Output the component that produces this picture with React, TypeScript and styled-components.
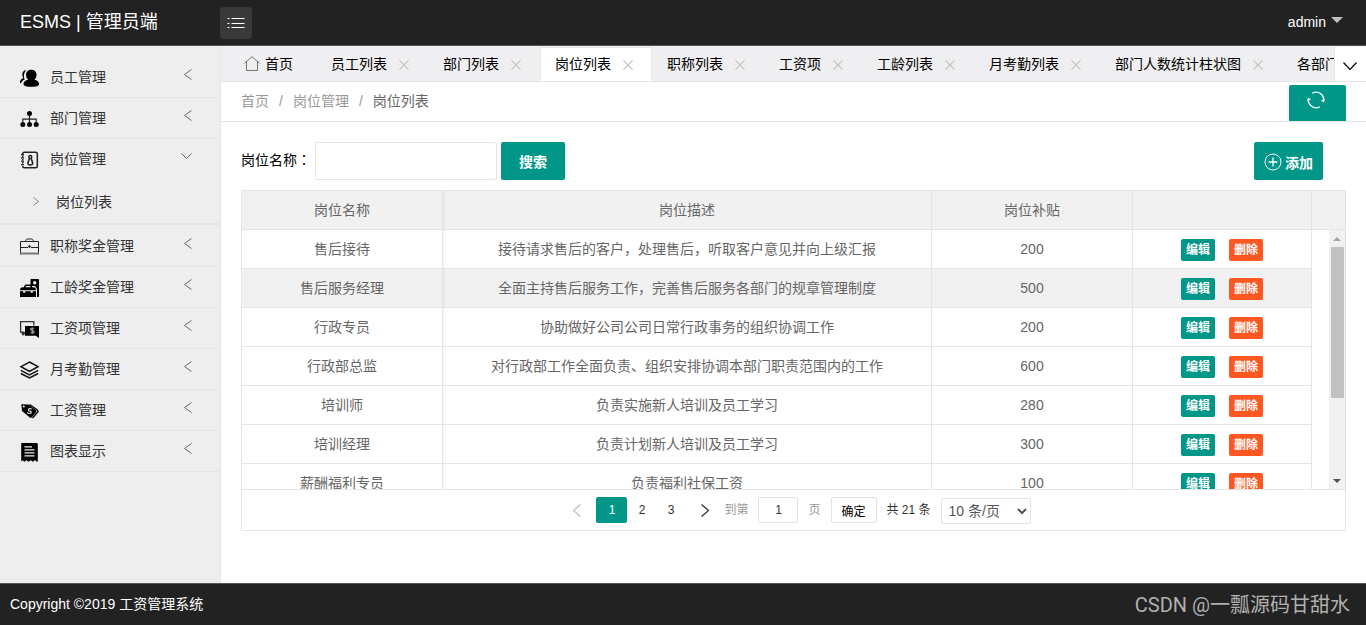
import React from "react";
import styled, { createGlobalStyle, css } from "styled-components";

const GlobalStyle = createGlobalStyle`
  *, *::before, *::after { box-sizing: border-box; }
  html, body { margin: 0; padding: 0; }
  body, button, input, select {
    font-family: "Liberation Sans", "Noto Sans CJK SC", sans-serif;
    font-size: 14px;
  }
  body { background: #fff; color: #000; line-height: 20px; }
  ul, ol { list-style: none; margin: 0; padding: 0; }
  a { color: inherit; text-decoration: none; }
  button { cursor: pointer; border: 0; padding: 0; margin: 0; background: none; color: inherit; }
  svg { display: block; flex: none; }
`;

const Page = styled.div`
  display: flex;
  flex-direction: column;
  min-height: 100vh;
`;

const TopBar = styled.header`
  display: flex;
  align-items: center;
  height: 46px;
  background: #222;
  border-bottom: 1px solid #555;
  color: #fff;
`;

const Brand = styled.a`
  width: 220px;
  padding-left: 20px;
  padding-bottom: 2px;
  font-size: 18px;
  line-height: 24px;
`;

const MenuToggle = styled.button`
  display: flex;
  align-items: center;
  justify-content: center;
  width: 32px;
  height: 32px;
  border-radius: 3px;
  background: #393939;
`;

const UserMenu = styled.button`
  display: flex;
  align-items: center;
  gap: 5px;
  margin-left: auto;
  margin-right: 23px;
  padding-bottom: 2px;
  line-height: 20px;
`;

const Caret = styled.span`
  border: 6px solid transparent;
  border-top-color: #c0c0c0;
  border-bottom: 0;
  margin-bottom: 3px;
`;

const Middle = styled.div`
  display: flex;
  flex: 1;
`;

const Sidebar = styled.nav`
  flex: none;
  width: 221px;
  padding-top: 11px;
  background: #eee;
  border-right: 1px solid #e5e5e5;
  color: #333;
`;

const MenuGroup = styled.li<{ $open?: boolean }>`
  border-bottom: ${(p) => (p.$open ? 2 : 1)}px solid #e5e5e5;
  margin-bottom: ${(p) => (p.$open ? 1 : 0)}px;
`;

const MenuLink = styled.a`
  display: flex;
  align-items: center;
  height: 40px;
  padding: 1px 28px 0 19px;
  gap: 10px;
`;

const MenuText = styled.span`
  flex: 1;
  line-height: 20px;
  padding-bottom: 2px;
`;

const MenuArrow = styled.span`
  margin-bottom: 7px;
`;

const SubLink = styled.a`
  display: flex;
  align-items: center;
  gap: 17px;
  height: 44px;
  padding: 1px 0 0 33px;
`;

const Main = styled.main`
  flex: 1;
  min-width: 0;
`;

const TabBar = styled.div`
  display: flex;
  height: 36px;
  background: #efeef0;
  border-bottom: 1px solid #e5e5e5;
`;

const TabList = styled.ul`
  display: flex;
  flex: 1;
  min-width: 0;
  overflow: hidden;
  padding-left: 8px;
`;

const Tab = styled.li<{ $active?: boolean }>`
  display: flex;
  flex: none;
  align-items: center;
  gap: 12px;
  height: 34px;
  margin-top: 1px;
  padding: 0 18px 2px 14px;
  border: 1px solid ${(p) => (p.$active ? "#e5e5e5" : "transparent")};
  border-bottom: 0;
  background: ${(p) => (p.$active ? "#fff" : "transparent")};
  white-space: nowrap;
  button {
    padding-top: 2px;
  }
`;

const HomeTab = styled(Tab)`
  gap: 5px;
  padding: 0 22px 2px 14px;
`;

const TabDrop = styled.button`
  display: flex;
  flex: none;
  align-items: center;
  justify-content: center;
  width: 32px;
  height: 34px;
  margin-top: 1px;
  padding: 4px 2px 0 0;
  background: #fff;
  border-left: 1px solid #e5e5e5;
`;

const CrumbBar = styled.div`
  display: flex;
  align-items: flex-end;
  justify-content: space-between;
  height: 40px;
  padding: 0 20px;
  border-bottom: 1px solid #e5e5e5;
`;

const Crumbs = styled.ol`
  display: flex;
  gap: 10px;
  padding-bottom: 10px;
  color: #999;
  li + li::before {
    content: "/";
    margin-right: 10px;
  }
  li:last-child a {
    color: #666;
  }
`;

const RefreshButton = styled.button`
  display: flex;
  justify-content: center;
  width: 57px;
  height: 36px;
  padding: 6px 3px 0 0;
  background: #009688;
  border-radius: 2px 2px 0 0;
`;

const Content = styled.div`
  padding: 20px;
`;

const Toolbar = styled.form`
  display: flex;
  align-items: center;
  gap: 4px;
  padding-right: 23px;
  margin-bottom: 10px;
`;

const FieldLabel = styled.label`
  padding-bottom: 2px;
`;

const Colon = styled.span`
  font-family: "Noto Sans CJK TC", sans-serif;
  line-height: 1;
`;

const TextBox = styled.input`
  width: 182px;
  height: 38px;
  padding: 0 10px;
  border: 1px solid #e6e6e6;
  border-radius: 2px;
`;

const SolidButton = styled.button`
  display: flex;
  align-items: center;
  justify-content: center;
  gap: 3px;
  height: 38px;
  padding: 0 18px;
  border-radius: 2px;
  background: #009688;
  color: #fff;
  font-weight: 700;
`;

const AddButton = styled(SolidButton)`
  margin-left: auto;
  padding: 2px 10px 0;
`;

const Panel = styled.section`
  border: 1px solid #e5e5e5;
  color: #666;
`;

const Grid = styled.table`
  width: 100%;
  table-layout: fixed;
  border-collapse: separate;
  border-spacing: 0;
  th, td {
    height: 39px;
    padding: 0;
    text-align: center;
    font-weight: 400;
    border-right: 1px solid #e5e5e5;
    border-bottom: 1px solid #e5e5e5;
    white-space: nowrap;
    overflow: hidden;
  }
  th:nth-child(2), td:nth-child(2) {
    box-shadow: inset 3px 0 3px -2px rgba(0, 0, 0, 0.06);
  }
`;

const HeadGrid = styled(Grid)`
  background: #f1f1f1;
  th:last-child { border-right: 0; }
`;

const BodyRow = styled.tr<{ $hover?: boolean }>`
  background: ${(p) => (p.$hover ? "#f1f1f1" : "#fff")};
`;

const Body = styled.div`
  display: flex;
  height: 260px;
  overflow: hidden;
  border-bottom: 1px solid #e5e5e5;
`;

const Rows = styled.div`
  flex: 1;
  min-width: 0;
  margin-right: 17px;
`;

const ScrollTrack = styled.div`
  display: flex;
  flex-direction: column;
  align-items: center;
  width: 16px;
  background: #f1f1f1;
`;

const ScrollThumb = styled.div`
  width: 13px;
  height: 151px;
  background: #c1c1c1;
`;

const ScrollArrow = styled.span<{ $down?: boolean }>`
  width: 8px;
  border: 4px solid transparent;
  ${(p) =>
    p.$down
      ? css`
          border-top-color: #505050;
          border-bottom: 0;
          margin: auto 0 6px;
        `
      : css`
          border-bottom-color: #a3a3a3;
          border-top: 0;
          margin: 7px 0 6px;
        `}
`;

const Actions = styled.div`
  display: flex;
  justify-content: center;
  gap: 14px;
  padding-top: 2px;
`;

const SmallButton = styled.button<{ $danger?: boolean }>`
  width: 34px;
  height: 22px;
  line-height: 22px;
  border-radius: 2px;
  background: ${(p) => (p.$danger ? "#ff5722" : "#009688")};
  color: #fff;
  font-size: 12px;
  font-weight: 700;
`;

const Pager = styled.div`
  display: flex;
  align-items: center;
  justify-content: center;
  height: 40px;
  padding-left: 1px;
  font-size: 12px;
  color: #333;
  gap: 10px;
`;

const PageButtons = styled.div`
  display: flex;
  align-items: center;
  margin-right: -10px;
`;

const PageButton = styled.button<{ $active?: boolean }>`
  display: flex;
  align-items: center;
  justify-content: center;
  width: ${(p) => (p.$active ? 31 : 29)}px;
  height: 26px;
  border-radius: 2px;
  font-size: 12px;
  color: ${(p) => (p.$active ? "#fff" : "#333")};
  background: ${(p) => (p.$active ? "#009688" : "transparent")};
`;

const ArrowButton = styled(PageButton)`
  width: 39px;
`;

const JumpLabel = styled.label`
  display: flex;
  align-items: center;
  gap: 10px;
  color: #999;
`;

const PageInput = styled.input`
  width: 40px;
  height: 26px;
  padding: 0;
  border: 1px solid #e2e2e2;
  border-radius: 2px;
  text-align: center;
  font-size: 12px;
  color: #333;
`;

const ConfirmButton = styled.button`
  width: 46px;
  height: 26px;
  border: 1px solid #e2e2e2;
  border-radius: 2px;
  font-size: 12px;
  color: #000;
`;

const SizeSelect = styled.select`
  width: 90px;
  height: 26px;
  margin-top: 2px;
  padding: 0 3px;
  border: 1px solid #e2e2e2;
  border-radius: 2px;
  background: #fff;
  color: #555;
`;

const Footer = styled.footer`
  display: flex;
  align-items: center;
  justify-content: space-between;
  height: 42px;
  padding: 0 16px 0 10px;
  background: #222;
  border-top: 1px solid #555;
  color: #fff;
`;

const Copyright = styled.span`
  padding-bottom: 2px;
`;

const Credit = styled.span`
  font-family: Roboto, "Noto Sans CJK SC", sans-serif;
  font-size: 20px;
  line-height: 24px;
  color: #b0b0b0;
`;

type ChevronProps = {
  dir: "left" | "right" | "down";
  w: number;
  h: number;
  color?: string;
  stroke?: number;
};

const Chevron = ({ dir, w, h, color = "#666", stroke = 1 }: ChevronProps) => {
  const pts =
    dir === "left"
      ? `${w - 0.5},0.5 0.5,${h / 2} ${w - 0.5},${h - 0.5}`
      : dir === "right"
      ? `0.5,0.5 ${w - 0.5},${h / 2} 0.5,${h - 0.5}`
      : `0.5,0.5 ${w / 2},${h - 0.5} ${w - 0.5},0.5`;
  return (
    <svg width={w} height={h} viewBox={`0 0 ${w} ${h}`} fill="none" stroke={color} strokeWidth={stroke} aria-hidden="true">
      <polyline points={pts} />
    </svg>
  );
};

const CloseIcon = () => (
  <svg width="10" height="10" viewBox="0 0 10 10" fill="none" stroke="#c2c2c2" strokeWidth="1.2" aria-hidden="true">
    <path d="M0.4 0.4 9.600 9.600M9.600 0.4 0.4 9.600" />
  </svg>
);

const MenuIcon = ({ children }: { children: React.ReactNode }) => (
  <svg width="21" height="20" viewBox="0 0 21 20" fill="#000" aria-hidden="true">
    {children}
  </svg>
);

const icons: Record<string, React.ReactNode> = {
  staff: (
    <>
      <path d="M12.300 1.800c3.300 0 5.200 2.100 5.200 5 0 2.200-.8 3.900-2.100 5 2.800.6 4.700 2 4.700 4.100 0 1.900-3.200 2.900-7.800 2.900s-7.800-1-7.800-2.900c0-2.100 1.900-3.500 4.700-4.100-1.300-1.100-2.100-2.800-2.100-5 0-2.900 1.900-5 5.200-5z" />
      <path d="M7.200 2.200C4.700 2.300 3.300 4 3.300 6.500c0 1.500.4 2.700 1.100 3.600C2.300 11.100.9 12.500.9 14.300c0 .6.4 1 1.100 1.300.3-2 1.500-3.300 3.600-4.200-1.300-3.100-.8-6.600 1.600-9.200z" />
    </>
  ),
  tree: (
    <>
      <circle cx="10.500" cy="4.500" r="2.500" />
      <circle cx="3.800" cy="15.400" r="2.500" />
      <circle cx="10.500" cy="15.400" r="2.500" />
      <circle cx="17.200" cy="15.400" r="2.500" />
      <path d="M3.800 14V10.200H17.200V14M10.500 6V14" fill="none" stroke="#222" strokeWidth="1.200" />
    </>
  ),
  book: (
    <>
      <path d="M3.700 4V3.700c0-.9.600-1.500 1.500-1.500h11.600c.9 0 1.500.6 1.500 1.500v12.600c0 .9-.6 1.500-1.500 1.500H5.200c-.9 0-1.500-.6-1.500-1.500V16M3.700 5.500v1.500M3.700 8.700v1.500M3.700 11.900v1.500" fill="none" stroke="#222" strokeWidth="1.500" />
      <path d="M2 4.700h3M2 7.900h3M2 11.100h3M2 14.700h3" stroke="#222" strokeWidth="1.300" />
      <circle cx="11.300" cy="7" r="1.500" fill="none" stroke="#222" strokeWidth="1.400" />
      <path d="M10.300 8.700 8.900 13c-.2 1.200.8 2 2.400 2s2.600-.8 2.400-2L12.300 8.700" fill="none" stroke="#222" strokeWidth="1.600" />
    </>
  ),
  briefcase: (
    <g fill="none" stroke="#222">
      <path d="M1.500 17.500v-13h18v13M1.500 10.500h7.500M12 10.500h7.500M6.500 4.500c.3-2 1-2.500 2.200-2.500h3.600c1.200 0 1.900.5 2.200 2.500" />
      <path d="M1 16.500h19" stroke="#777" strokeWidth="2" />
      <circle cx="10.500" cy="9.500" r="0.900" fill="#222" />
    </g>
  ),
  toolbox: (
    <>
      <path d="M12.500 1h6.500c.6 0 1 .4 1 1v16c0 .6-.4 1-1 1h-1v-8l-2-3h-4.500V2c0-.6.4-1 1-1z" />
      <circle cx="15.700" cy="4.700" r="1.700" fill="#eee" />
      <path d="M1 12.200c0-2 1-3 2.600-3H5C5.200 7.400 6 6.500 7.400 6.500h3.400c1.400 0 2.200.9 2.400 2.700h1.200c1.600 0 2.600 1 2.600 3zM6.500 9.200h5.200c-.2-1-.6-1.300-1.200-1.300H7.700c-.6 0-1 .3-1.200 1.300zM1 13.200h3.200v1.500h2v-1.500h5.600v1.500h2v-1.500H17V19H1z" fillRule="evenodd" />
    </>
  ),
  cash: (
    <>
      <path d="M4.700 16.200v-3H1.600V2.600h13.200V6.500" fill="none" stroke="#333" strokeWidth="1.300" />
      <path d="M2 13.200h4v1.500l-2.500 2z" fill="#333" />
      <path d="M6 7H20v12l-3.300-2.300H6z" />
      <path d="M15 9.600c-.7-.6-3.400-.8-3.400.7s3.500 1 3.500 2.500-2.800 1.400-3.600.6M13.400 8.400v6.600" fill="none" stroke="#999" strokeWidth="1.300" />
    </>
  ),
  layers: (
    <g fill="none" stroke="#111" strokeWidth="1.500">
      <path d="M10.500 2 19 6.700l-8.500 4.700L2 6.700z" />
      <path d="M1.800 10.300l8.700 4.500 8.700-4.500M1.800 13.500l8.700 4.500 8.700-4.500" />
    </g>
  ),
  tag: (
    <>
      <path d="M2.300 3.200 9.500 3.400 16.800 9c.8.600.9 1.200.3 1.900L12.700 16.500c-.6.600-1.200.6-1.900 0L3 10z" />
      <path d="M10.500 3.500l8 5.700c.7.600.8 1.200.2 1.900L13.500 17" fill="none" stroke="#111" strokeWidth="1.500" />
      <circle cx="4.800" cy="5.500" r="1" fill="#eee" />
      <path d="M12.600 8.300c-1.300-1.600-3.600-.5-3.100.9.500 1.300 2.700.5 2.800 2-.1 1.500-2.500 1.800-4 .2" fill="none" stroke="#ddd" strokeWidth="1.200" />
    </>
  ),
  receipt: (
    <>
      <path d="M3.500 1h14c.8 0 1.300.5 1.300 1.300V19.500h-1.300l-1.500-1.600-1.500 1.600h-1.300l-1.400-1.600-1.500 1.600H8.900l-1.400-1.600L6 19.500H4.900l-1.300-1.200-1.400 1.200V2.300C2.200 1.500 2.700 1 3.500 1z" />
      <path d="M5.500 4.900h7.500M5.500 7.900h10M5.500 10.900h10M5.500 13.900h10" stroke="#eee" strokeWidth="1.300" />
    </>
  ),
};

const menu = [
  { icon: "staff", label: "员工管理" },
  { icon: "tree", label: "部门管理" },
  { icon: "book", label: "岗位管理", children: ["岗位列表"] },
  { icon: "briefcase", label: "职称奖金管理" },
  { icon: "toolbox", label: "工龄奖金管理" },
  { icon: "cash", label: "工资项管理" },
  { icon: "layers", label: "月考勤管理" },
  { icon: "tag", label: "工资管理" },
  { icon: "receipt", label: "图表显示" },
];

const tabs = ["员工列表", "部门列表", "岗位列表", "职称列表", "工资项", "工龄列表", "月考勤列表", "部门人数统计柱状图", "各部门工资统计"];

const posts = [
  { name: "售后接待", desc: "接待请求售后的客户，处理售后，听取客户意见并向上级汇报", pay: 200 },
  { name: "售后服务经理", desc: "全面主持售后服务工作，完善售后服务各部门的规章管理制度", pay: 500 },
  { name: "行政专员", desc: "协助做好公司公司日常行政事务的组织协调工作", pay: 200 },
  { name: "行政部总监", desc: "对行政部工作全面负责、组织安排协调本部门职责范围内的工作", pay: 600 },
  { name: "培训师", desc: "负责实施新人培训及员工学习", pay: 280 },
  { name: "培训经理", desc: "负责计划新人培训及员工学习", pay: 300 },
  { name: "薪酬福利专员", desc: "负责福利社保工资", pay: 100 },
];

const FixedCol = styled.col<{ $w: number }>`
  width: ${(p) => p.$w}px;
`;

const Columns = ({ gutter }: { gutter?: boolean }) => (
  <colgroup>
    <FixedCol $w={201} />
    <col />
    <FixedCol $w={201} />
    <FixedCol $w={179} />
    {gutter && <FixedCol $w={33} />}
  </colgroup>
);

export default function App() {
  return (
    <>
      <GlobalStyle />
      <Page>
        <TopBar>
          <Brand href="#">ESMS | 管理员端</Brand>
          <MenuToggle aria-label="菜单">
            <svg width="18" height="12" viewBox="0 0 18 12" stroke="#fff" strokeWidth="1" aria-hidden="true">
              <path d="M0.500 1.500h2M4.500 1.500h13M0.500 6.500h2M4.500 6.500h13M0.500 10.500h2M4.500 10.500h13" />
            </svg>
          </MenuToggle>
          <UserMenu>
            admin
            <Caret />
          </UserMenu>
        </TopBar>

        <Middle>
          <Sidebar>
            <ul>
              {menu.map((m) => (
                <MenuGroup key={m.label} $open={!!m.children}>
                  <MenuLink href="#">
                    <MenuIcon>{icons[m.icon]}</MenuIcon>
                    <MenuText>{m.label}</MenuText>
                    <MenuArrow>
                      {m.children ? <Chevron dir="down" w={11} h={6} /> : <Chevron dir="left" w={8} h={11} />}
                    </MenuArrow>
                  </MenuLink>
                  {m.children?.map((c) => (
                    <SubLink href="#" key={c}>
                      <Chevron dir="right" w={6} h={9} color="#7b8794" />
                      <span>{c}</span>
                    </SubLink>
                  ))}
                </MenuGroup>
              ))}
            </ul>
          </Sidebar>

          <Main>
            <TabBar>
              <TabList>
                <HomeTab>
                  <svg width="16" height="15" viewBox="0 0 16 15" fill="none" stroke="#777" aria-hidden="true">
                    <path d="M0.500 7.300 8 0.700l7.500 6.600M2.500 6v8.500h11V6" />
                  </svg>
                  <a href="#">首页</a>
                </HomeTab>
                {tabs.map((t) => (
                  <Tab key={t} $active={t === "岗位列表"}>
                    <a href="#">{t}</a>
                    <button aria-label={`关闭${t}`}>
                      <CloseIcon />
                    </button>
                  </Tab>
                ))}
              </TabList>
              <TabDrop aria-label="更多">
                <Chevron dir="down" w={14} h={8} color="#111" stroke={1.3} />
              </TabDrop>
            </TabBar>

            <CrumbBar>
              <Crumbs>
                <li><a href="#">首页</a></li>
                <li><a href="#">岗位管理</a></li>
                <li><a href="#">岗位列表</a></li>
              </Crumbs>
              <RefreshButton aria-label="刷新">
                <svg width="18" height="18" viewBox="0 0 18 18" fill="none" stroke="#fff" strokeWidth="1.200" aria-hidden="true">
                  <path d="M5.200 2.200A7.700 7.700 0 0 1 16.600 10.300M12.800 15.700A7.700 7.700 0 0 1 1.400 7.600" />
                  <path d="M14 9l2.500 2.500L18 8.500zM4 9 1.500 6.500 0 9.500z" fill="#fff" stroke="none" />
                </svg>
              </RefreshButton>
            </CrumbBar>

            <Content>
              <Toolbar onSubmit={(e) => e.preventDefault()}>
                <FieldLabel htmlFor="post-name">
                  岗位名称<Colon>：</Colon>
                </FieldLabel>
                <TextBox id="post-name" type="text" />
                <SolidButton type="submit">搜索</SolidButton>
                <AddButton type="button">
                  <svg width="18" height="18" viewBox="0 0 18 18" fill="none" stroke="#fff" aria-hidden="true">
                    <circle cx="9" cy="9" r="8" />
                    <path d="M9 4.500v9M4.500 9h9" strokeWidth="1.300" />
                  </svg>
                  添加
                </AddButton>
              </Toolbar>

              <Panel>
                <HeadGrid>
                  <Columns gutter />
                  <thead>
                    <tr>
                      <th>岗位名称</th>
                      <th>岗位描述</th>
                      <th>岗位补贴</th>
                      <th />
                      <th />
                    </tr>
                  </thead>
                </HeadGrid>
                <Body>
                  <Rows>
                    <Grid>
                      <Columns />
                      <tbody>
                        {posts.map((p, i) => (
                          <BodyRow key={p.name} $hover={i === 1}>
                            <td>{p.name}</td>
                            <td>{p.desc}</td>
                            <td>{p.pay}</td>
                            <td>
                              <Actions>
                                <SmallButton>编辑</SmallButton>
                                <SmallButton $danger>删除</SmallButton>
                              </Actions>
                            </td>
                          </BodyRow>
                        ))}
                      </tbody>
                    </Grid>
                  </Rows>
                  <ScrollTrack>
                    <ScrollArrow />
                    <ScrollThumb />
                    <ScrollArrow $down />
                  </ScrollTrack>
                </Body>
                <Pager>
                  <PageButtons>
                    <ArrowButton aria-label="上一页">
                      <Chevron dir="left" w={8} h={13} color="#c4c4c4" stroke={1.5} />
                    </ArrowButton>
                    <PageButton $active>1</PageButton>
                    <PageButton>2</PageButton>
                    <PageButton>3</PageButton>
                    <ArrowButton aria-label="下一页">
                      <Chevron dir="right" w={8} h={13} color="#444" stroke={1.5} />
                    </ArrowButton>
                  </PageButtons>
                  <JumpLabel>
                    到第
                    <PageInput defaultValue="1" />
                    页
                  </JumpLabel>
                  <ConfirmButton>确定</ConfirmButton>
                  <span>共 21 条</span>
                  <SizeSelect aria-label="每页条数" defaultValue="10">
                    <option value="10">10 条/页</option>
                    <option value="20">20 条/页</option>
                  </SizeSelect>
                </Pager>
              </Panel>
            </Content>
          </Main>
        </Middle>

        <Footer>
          <Copyright>Copyright ©2019 工资管理系统</Copyright>
          <Credit>CSDN @一瓢源码甘甜水</Credit>
        </Footer>
      </Page>
    </>
  );
}
